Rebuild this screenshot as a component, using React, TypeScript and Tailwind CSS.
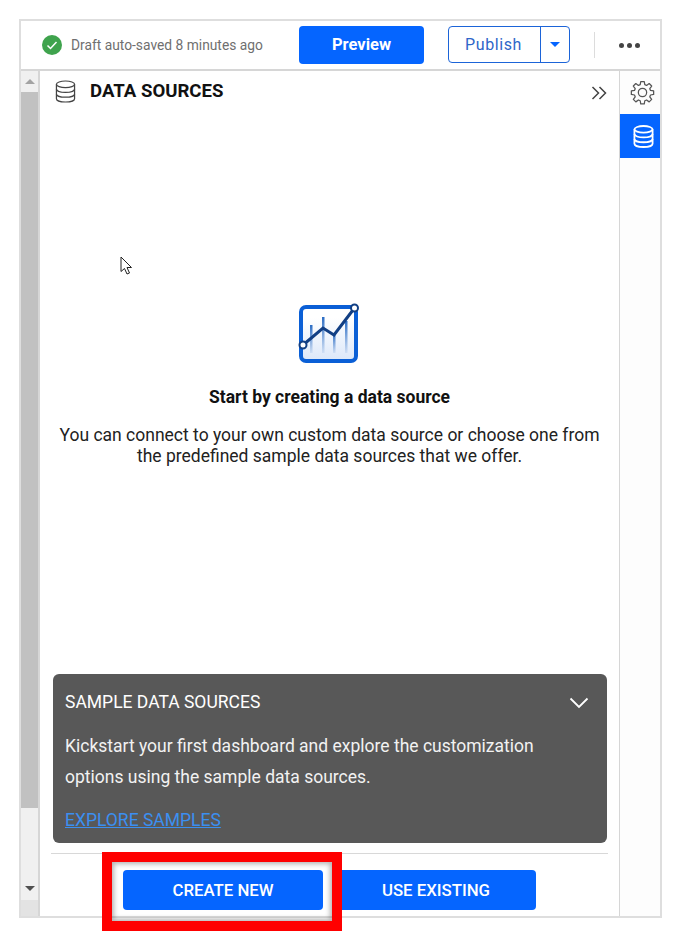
import React from "react";

const F = { fontFamily: "Roboto, 'Liberation Sans', sans-serif" };

function Db({ className, stroke, width = 1.3 }: { className?: string; stroke: string; width?: number }) {
  return (
    <svg viewBox="0 0 22 24" className={className} fill="none" stroke={stroke} strokeWidth={width}>
      <ellipse cx="11" cy="4.5" rx="9.5" ry="3.5" />
      <path d="M1.5 4.5v15c0 2 4.2 3.5 9.5 3.5s9.5-1.500 9.500-3.500v-15" />
      <path d="M1.500 9.500c0 2 4.200 3.500 9.500 3.500s9.500-1.500 9.500-3.500" />
      <path d="M1.500 14.500c0 2 4.200 3.500 9.500 3.500s9.500-1.500 9.500-3.500" />
    </svg>
  );
}

function Gear() {
  return (
    <svg viewBox="0 0 24 24" className="h-[25px] w-[25px]" fill="none" stroke="#555" strokeWidth="1.200" strokeLinejoin="round">
      <path d="M10.300 1.500h3.400l.5 3 1.700.7 2.500-1.800 2.400 2.400-1.800 2.500.7 1.700 3 .5v3.400l-3 .5-.7 1.700 1.800 2.500-2.400 2.400-2.500-1.800-1.700.7-.5 3h-3.400l-.5-3-1.700-.7-2.500 1.800-2.400-2.400 1.800-2.500-.7-1.700-3-.5v-3.400l3-.5.7-1.700-1.800-2.500 2.400-2.400 2.500 1.800 1.700-.7z" />
      <circle cx="12" cy="12" r="4" />
    </svg>
  );
}

function ChartIcon() {
  return (
    <svg viewBox="0 0 62 62" className="mr-[2px] h-[62px] w-[62px]" fill="none">
      <defs>
        <linearGradient id="fillG" x1="0" y1="0" x2="0" y2="1">
          <stop offset="0.2" stopColor="#ffffff" />
          <stop offset="1" stopColor="#dbe7f9" />
        </linearGradient>
        <linearGradient id="barG" x1="0" y1="0" x2="0" y2="1">
          <stop offset="0" stopColor="#2a6cc4" />
          <stop offset="1" stopColor="#2a6cc4" stopOpacity="0.1" />
        </linearGradient>
      </defs>
      <rect x="3" y="4" width="55" height="54" rx="5" fill="url(#fillG)" stroke="#0a5fd6" strokeWidth="4" />
      <rect x="12" y="22" width="2.500" height="28" fill="url(#barG)" />
      <rect x="24" y="14" width="2.500" height="36" fill="url(#barG)" />
      <rect x="35" y="30" width="2.500" height="20" fill="url(#barG)" />
      <rect x="47" y="18" width="2.500" height="32" fill="url(#barG)" />
      <path d="M5 42 L25 25 L36 32 L56.500 5" stroke="#123f84" strokeWidth="3" />
      <circle cx="5" cy="42" r="3.500" fill="#fff" stroke="#123f84" strokeWidth="2" />
      <circle cx="56.500" cy="5" r="3.500" fill="#fff" stroke="#123f84" strokeWidth="2" />
    </svg>
  );
}

export default function App() {
  return (
    <div className="relative h-[937px] w-[681px] overflow-hidden bg-white pl-[19px] pt-[19px]" style={F}>
      <div className="flex h-[899px] w-[643px] flex-col border-2 border-[#dedede]">
        {/* Top bar */}
        <div className="flex h-[50px] shrink-0 items-center border-b-2 border-[#d6d6d6] bg-white pl-[21px]">
          <svg viewBox="0 0 20 20" className="h-[20px] w-[20px] shrink-0">
            <circle cx="10" cy="10" r="10" fill="#3fa34d" />
            <path d="M5.500 10.500l3 3 6-6.500" stroke="#fff" strokeWidth="1.500" fill="none" />
          </svg>
          <span className="ml-[9px] w-[228px] whitespace-nowrap text-[13.800px] text-[#6f6f6f]">Draft auto-saved 8 minutes ago</span>
          <button className="h-[38px] w-[125px] rounded-[4px] bg-[#0565ff] pt-[1px] text-[16.500px] font-bold text-white">Preview</button>
          <div className="mb-[1px] ml-[24px] flex h-[37px] w-[122px] overflow-hidden rounded-[4px] border border-[#1c64d8]">
            <span className="flex w-[92px] items-center justify-center border-r border-[#1c64d8] pr-[2px] text-[16px] tracking-[0.6px] text-[#2f66c9]">Publish</span>
            <span className="flex flex-1 items-center justify-center">
              <span className="h-0 w-0 border-x-[5px] border-t-[5px] border-x-transparent border-t-[#0565ff]" />
            </span>
          </div>
          <div className="ml-[24px] h-[26px] w-px bg-[#dcdcdc]" />
          <div className="ml-[24px] flex gap-[3px]">
            <span className="h-[5px] w-[5px] rounded-full bg-[#444]" />
            <span className="h-[5px] w-[5px] rounded-full bg-[#444]" />
            <span className="h-[5px] w-[5px] rounded-full bg-[#444]" />
          </div>
        </div>

        {/* Body */}
        <div className="flex min-h-0 flex-1">
          {/* Scrollbar */}
          <div className="flex w-[19px] shrink-0 flex-col items-center border-r-2 border-[#d6d6d6] bg-[#f0f0f0]">
            <div className="flex h-[21px] w-full items-center justify-center">
              <span className="h-0 w-0 border-x-[5px] border-b-[5px] border-x-transparent border-b-[#a3a3a3]" />
            </div>
            <div className="h-[716px] w-full bg-[#c1c1c1]" />
            <div className="flex-1" />
            <div className="flex h-[18px] w-full items-center justify-center pb-[6px]">
              <span className="h-0 w-0 border-x-[5px] border-t-[5px] border-x-transparent border-t-[#505050]" />
            </div>
            <div className="h-[16px] w-full bg-[#e3e3e3]" />
          </div>

          {/* Main */}
          <div className="flex min-w-0 flex-1 flex-col bg-white">
            <div className="flex h-[40px] shrink-0 items-center pl-[15px] pr-[12px]">
              <Db className="h-[23px] w-[21px] shrink-0" stroke="#444" />
              <h1 className="ml-[14px] flex-1 text-[18.600px] font-bold leading-none text-[#111]">DATA SOURCES</h1>
              <svg viewBox="0 0 16 14" className="mt-[3px] h-[14px] w-[16px]" fill="none" stroke="#444" strokeWidth="1.500">
                <path d="M1.500 1l6 6-6 6M8.500 1l6 6-6 6" />
              </svg>
            </div>

            <div className="flex flex-1 flex-col items-center pt-[192px]">
              <ChartIcon />
              <p className="mt-[19px] text-[17.500px] font-bold text-[#111]">Start by creating a data source</p>
              <p className="mt-[15px] w-[560px] text-center text-[17.500px] leading-[21px] text-[#222]">
                You can connect to your own custom data source or choose one from the predefined sample data sources that we offer.
              </p>
            </div>

            <div className="ml-[13px] mr-[12px] h-[169px] shrink-0 rounded-[6px] bg-[#585858] px-[12px] text-white">
              <div className="flex h-[57px] items-center justify-between pr-[6px]">
                <span className="text-[17.500px]">SAMPLE DATA SOURCES</span>
                <svg viewBox="0 0 20 12" className="h-[12px] w-[20px]" fill="none" stroke="#fff" strokeWidth="1.800">
                  <path d="M1.500 1.500l8.500 8.500 8.500-8.500" />
                </svg>
              </div>
              <p className="text-[17.500px] leading-[31px] text-[#f2f2f2]">
                Kickstart your first dashboard and explore the customization options using the sample data sources.
              </p>
              <a className="mt-[17px] block text-[17.500px] leading-[20px] text-[#3b8ff0] underline">EXPLORE SAMPLES</a>
            </div>

            <div className="mx-[11px] mt-[10px] flex h-[63px] shrink-0 justify-center gap-[13px] border-t border-[#d8d8d8] pt-[16px]">
              <button className="h-[40px] w-[200px] rounded-[4px] bg-[#0565ff] pt-[1px] text-[16.800px] font-medium text-white">CREATE NEW</button>
              <button className="h-[40px] w-[200px] rounded-[4px] bg-[#0565ff] pt-[1px] text-[16.800px] font-medium text-white">USE EXISTING</button>
            </div>
          </div>

          {/* Rail */}
          <div className="flex w-[41px] shrink-0 flex-col border-l border-[#d6d6d6] bg-[#fdfdfd]">
            <div className="flex h-[43px] items-center justify-center pl-[5px]">
              <Gear />
            </div>
            <div className="flex h-[44px] items-center justify-center bg-[#0565ff] pl-[6px]">
              <Db className="h-[23px] w-[21px]" stroke="#fff" width={1.900} />
            </div>
          </div>
        </div>
      </div>

      {/* Red annotation */}
      <div className="absolute left-[102px] top-[852px] h-[79px] w-[240px] border-[10px] border-[#ff0000] shadow-[inset_0_0_5px_2px_rgba(0,0,0,0.3)]" />

      {/* Cursor */}
      <svg viewBox="0 0 14 20" className="absolute left-[120px] top-[256px] h-[20px] w-[14px]" fill="#fff" stroke="#222" strokeWidth="1">
        <path d="M1 1v14.500l3.500-3 2.500 5.500 2.500-1-2.500-5.500h4.500z" />
      </svg>
    </div>
  );
}
